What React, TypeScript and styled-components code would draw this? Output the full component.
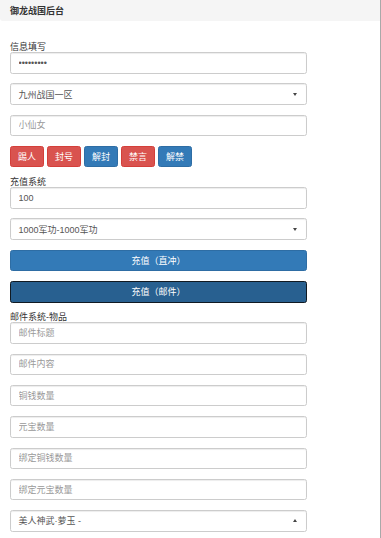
import React from "react";
import styled, { createGlobalStyle, css } from "styled-components";

const GlobalStyle = createGlobalStyle`
  html, body {
    margin: 0;
    padding: 0;
    background: #fff;
  }
  body {
    font-family: "Liberation Sans", "Noto Sans CJK SC", sans-serif;
    font-size: 9px;
    color: #333;
  }
  * {
    box-sizing: border-box;
  }
`;

const Page = styled.div`
  width: 381px;
  min-height: 538px;
  border-right: 1px solid #a9a9a9;
`;

const Heading = styled.div`
  height: 21px;
  padding-left: 10px;
  display: flex;
  align-items: center;
  background: #f5f5f5;
  border-bottom-left-radius: 3px;
  font-weight: bold;
  font-size: 9px;
  color: #333;
`;

const Body = styled.div`
  padding: 21px 73px 0 10px;
`;

const Label = styled.div`
  height: 10px;
  line-height: 10px;
  font-size: 9px;
  color: #333;
`;

const Group = styled.div`
  margin-bottom: 9.8px;
`;

const fieldBase = css`
  display: block;
  width: 100%;
  height: 21.5px;
  padding: 0 7.5px;
  border: 1px solid #ccc;
  border-radius: 2.5px;
  background: #fff;
  box-shadow: inset 0 1px 1px rgba(0, 0, 0, 0.075);
  font-family: "Liberation Sans", "Noto Sans CJK SC", sans-serif;
  font-size: 9px;
  color: #555;
  outline: none;
`;

const TextInput = styled.input`
  ${fieldBase}
  &::placeholder {
    color: #999;
  }
`;

const Select = styled.div`
  ${fieldBase}
  display: flex;
  align-items: center;
  justify-content: space-between;
  padding-right: 9px;
`;

const Caret = styled.span<{ $up?: boolean }>`
  width: 0;
  height: 0;
  border-left: 2.5px solid transparent;
  border-right: 2.5px solid transparent;
  ${(p) =>
    p.$up
      ? css`
          border-bottom: 3px solid #444;
        `
      : css`
          border-top: 3px solid #444;
        `}
`;

const ButtonRow = styled.div`
  display: flex;
  gap: 3px;
`;

const Button = styled.button<{ $kind: "danger" | "primary" | "active"; $block?: boolean }>`
  height: 21.5px;
  width: ${(p) => (p.$block ? "100%" : "34px")};
  padding: 0;
  border: 1px solid transparent;
  border-radius: 2.5px;
  font-family: "Liberation Sans", "Noto Sans CJK SC", sans-serif;
  font-size: 9px;
  color: #fff;
  cursor: pointer;
  ${(p) =>
    p.$kind === "danger" &&
    css`
      background: #d9534f;
      border-color: #d43f3a;
    `}
  ${(p) =>
    p.$kind === "primary" &&
    css`
      background: #337ab7;
      border-color: #2e6da4;
    `}
  ${(p) =>
    p.$kind === "active" &&
    css`
      background: #286090;
      border: 1.5px solid #111a22;
    `}
`;

const actions: { text: string; kind: "danger" | "primary" }[] = [
  { text: "踢人", kind: "danger" },
  { text: "封号", kind: "danger" },
  { text: "解封", kind: "primary" },
  { text: "禁言", kind: "danger" },
  { text: "解禁", kind: "primary" },
];

const mailFields = ["邮件标题", "邮件内容", "铜钱数量", "元宝数量", "绑定铜钱数量", "绑定元宝数量"];

const App = () => {
  return (
    <Page>
      <GlobalStyle />
      <Heading>御龙战国后台</Heading>
      <Body>
        <Label>信息填写</Label>
        <Group>
          <TextInput type="password" defaultValue="123456789" readOnly />
        </Group>
        <Group>
          <Select>
            <span>九州战国一区</span>
            <Caret />
          </Select>
        </Group>
        <Group>
          <TextInput type="text" placeholder="小仙女" />
        </Group>
        <Group>
          <ButtonRow>
            {actions.map((a) => (
              <Button key={a.text} $kind={a.kind}>
                {a.text}
              </Button>
            ))}
          </ButtonRow>
        </Group>

        <Label>充值系统</Label>
        <Group>
          <TextInput type="text" defaultValue="100" readOnly />
        </Group>
        <Group>
          <Select>
            <span>1000军功-1000军功</span>
            <Caret />
          </Select>
        </Group>
        <Group>
          <Button $kind="primary" $block>
            充值（直冲）
          </Button>
        </Group>
        <Group>
          <Button $kind="active" $block>
            充值（邮件）
          </Button>
        </Group>

        <Label>邮件系统-物品</Label>
        {mailFields.map((f) => (
          <Group key={f}>
            <TextInput type="text" placeholder={f} />
          </Group>
        ))}
        <Group>
          <Select>
            <span>美人神武·萝玉 -</span>
            <Caret $up />
          </Select>
        </Group>
      </Body>
    </Page>
  );
};

export default App;
